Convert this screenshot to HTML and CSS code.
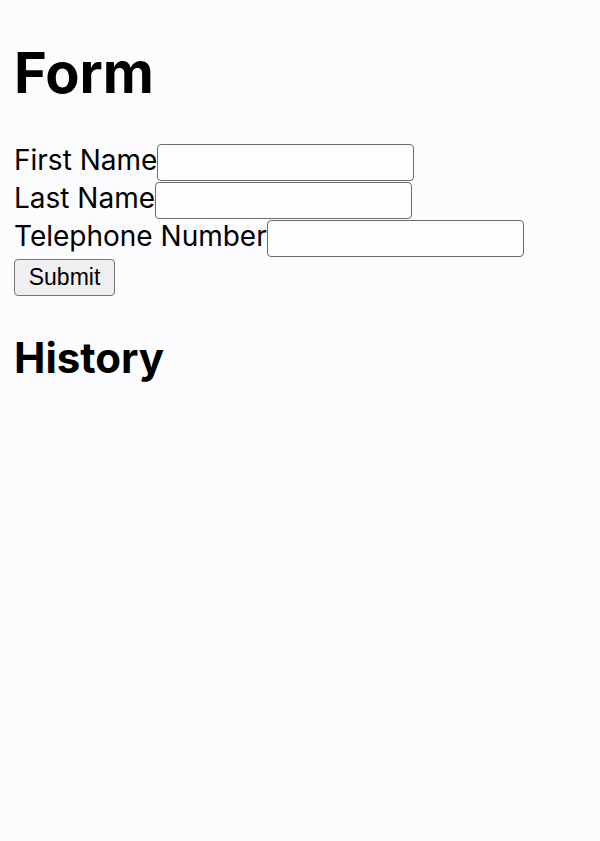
FILE: index.html
```html
<!DOCTYPE html>
<html>
<head>
<meta charset="utf-8">
<link rel="stylesheet" href="styles.css">
</head>
<body>
<h1 class="title">Form</h1>
<form class="form">
<label class="label">First Name</label><input class="field" type="text"><br>
<label class="label">Last Name</label><input class="field" type="text"><br>
<label class="label">Telephone Number</label><input class="field" type="text"><br>
<button class="submit" type="button">Submit</button>
</form>
<h2 class="subtitle">History</h2>
</body>
</html>
```
FILE: styles.css
```css
html, body {
  background: #fcfbfd;
}
body {
  margin: 14px;
  font-family: Inter, "Noto Sans", sans-serif;
  font-size: 28px;
  color: #000;
}
.title {
  font-size: 56px;
  font-weight: 700;
  margin: 26px 0 36px;
  line-height: 1.2;
}
.form {
  line-height: 34px;
}
.label {
  font-size: 28px;
}
.field {
  box-sizing: border-box;
  width: 257px;
  height: 37px;
  border: 1.5px solid #6d6d6d;
  border-radius: 4px;
  background: #fdfcfe;
  margin: 0;
  padding: 0;
  vertical-align: middle;
}
.submit {
  box-sizing: border-box;
  width: 101px;
  height: 37px;
  font-family: "Liberation Sans", Arial, sans-serif;
  font-size: 23px;
  color: #000;
  background: #efeff1;
  border: 1.5px solid #767676;
  border-radius: 4px;
  padding: 0;
  margin: 2px 0 0 0;
  vertical-align: bottom;
}
.subtitle {
  font-size: 42px;
  font-weight: 700;
  margin: 37px 0;
  line-height: 1.2;
}
```
